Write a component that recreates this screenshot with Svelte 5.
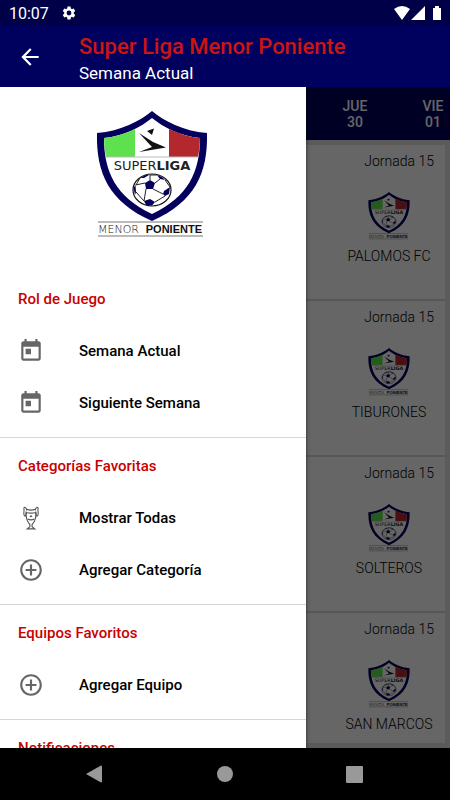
<script>
  let days = [
    { name: "MAR", number: "28" },
    { name: "MIÉ", number: "29" },
    { name: "JUE", number: "30" },
    { name: "VIE", number: "01" },
  ];

  let matches = ["PALOMOS FC", "TIBURONES", "SOLTEROS", "SAN MARCOS"];

  let sections = [
    {
      title: "Rol de Juego",
      items: [
        { icon: "calendar", label: "Semana Actual" },
        { icon: "calendar", label: "Siguiente Semana" },
      ],
    },
    {
      title: "Categorías Favoritas",
      items: [
        { icon: "trophy", label: "Mostrar Todas" },
        { icon: "add", label: "Agregar Categoría" },
      ],
    },
    {
      title: "Equipos Favoritos",
      items: [{ icon: "add", label: "Agregar Equipo" }],
    },
    { title: "Notificaciones", items: [] },
  ];
</script>

{#snippet crest()}
  <svg class="crest" viewBox="0 0 112 130" role="img" aria-label="Super Liga Menor Poniente">
    <path d="M56 1C44 11 25 21 1 23C0 63 13 92 56 111C99 92 112 63 111 23C87 21 68 11 56 1Z" fill="#05005c" />
    <path d="M56 8C45 17 28 26 8 28C8 62 20 87 56 104C92 87 104 62 104 28C84 26 67 17 56 8Z" fill="#fff" />
    <path d="M8 28C20 27 30 23 39 19V47H10Q8 38 8 28Z" fill="#5fe04f" />
    <path d="M104 28C92 27 82 23 73 19V47H102Q104 38 104 28Z" fill="#b3282d" />
    <path d="M51 21L58 18.500L56 25ZM43 23L57 32L70 37.500L43 42L56 37Z" fill="#111" />
    <path d="M10 47H102" stroke="#bbb" stroke-width="1" />
    <text class="wide" x="56" y="60" text-anchor="middle">SUPER<tspan class="bold">LIGA</tspan></text>
    <!-- ball -->
    <g transform="translate(0 11)">
      <ellipse cx="56" cy="69" rx="19" ry="16" fill="#fff" stroke="#111" stroke-width="1.200" />
      <path d="M49 62L54 59L59 62L57 68L50 68ZM37.500 67L39.500 64L40 71L39 74ZM68 70L74 66L73 73L69 75L67 73ZM48 80L54 78L59 81L56 84.500L50 84ZM44 57L50 54L53 54L48 57ZM61 54L66 56L69 59L64 58Z" fill="#05005c" />
      <path d="M39.500 64L49 62M54 59V54M59 62L64 58M57 68L67 73M50 68L48 80M40 71L48 80M59 81L69 75M54 54L61 54M44 57L40 64M69 59L74 66" fill="none" stroke="#222" stroke-width="1" />
    </g>
    <path d="M2 112H107M2 126H107" stroke="#777" stroke-width="1.200" />
    <text class="menor" x="2" y="123">MENOR</text>
    <text class="poniente" x="106" y="123" text-anchor="end">PONIENTE</text>
  </svg>
{/snippet}

{#snippet icon(name)}
  <svg class="icon" viewBox="0 0 24 24" aria-hidden="true">
    {#if name == "calendar"}
      <path d="M19 3h-1V1h-2v2H8V1H6v2H5c-1.110 0-2 .9-2 2v14c0 1.100.890 2 2 2h14c1.100 0 2-.9 2-2V5c0-1.100-.9-2-2-2zm0 16H5V8h14v11zM7 10h5v5H7z" />
    {:else if name == "add"}
      <path d="M13 7h-2v4H7v2h4v4h2v-4h4v-2h-4V7zm-1-5C6.480 2 2 6.480 2 12s4.480 10 10 10 10-4.480 10-10S17.520 2 12 2zm0 18c-4.410 0-8-3.590-8-8s3.590-8 8-8 8 3.590 8 8-3.590 8-8 8z" />
    {:else}
      <g fill="none" stroke="#555" stroke-width="1">
        <path d="M8 5C8 2 5 1 5.500 4C6 6 4.500 8 6 10C7 11 7.500 9 7.500 7" />
        <path d="M16 5C16 2 19 1 18.500 4C18 6 19.500 8 18 10C17 11 16.500 9 16.500 7" />
        <path d="M8 4Q12 5.500 16 4M7.500 7Q12 8 16.500 7M7.500 6C7 12 9 16 11 18V20L8.500 22H15.500L13 20V18C15 16 17 12 16.500 6M9 13Q12 14.500 15 13M11 11L12 10L13 11" />
      </g>
    {/if}
  </svg>
{/snippet}

<div class="phone">
  <div class="status">
    <span>10:07</span>
    <svg class="gear" viewBox="0 0 24 24" aria-hidden="true">
      <path d="M19.140 12.940c.040-.3.060-.610.060-.940s-.020-.640-.070-.940l2.030-1.580a.49.49 0 0 0 .120-.610l-1.920-3.320a.49.49 0 0 0-.590-.220l-2.390.960a7 7 0 0 0-1.620-.940l-.360-2.540A.48.48 0 0 0 13.920 2.400h-3.840a.47.47 0 0 0-.470.410l-.360 2.540c-.590.240-1.130.570-1.620.940l-2.390-.960a.48.48 0 0 0-.590.220L2.740 8.870a.47.47 0 0 0 .120.610l2.030 1.580c-.050.3-.090.630-.090.940s.020.640.070.940l-2.030 1.580a.49.49 0 0 0-.120.610l1.920 3.320c.120.220.370.290.590.220l2.390-.960c.5.380 1.030.7 1.620.940l.360 2.540c.050.240.240.410.480.410h3.840c.240 0 .440-.170.470-.410l.360-2.540a7 7 0 0 0 1.620-.940l2.390.960c.220.080.470 0 .590-.220l1.920-3.320a.47.47 0 0 0-.120-.610zM12 15.600A3.600 3.600 0 1 1 12 8.400a3.600 3.600 0 0 1 0 7.200z" />
    </svg>
    <svg class="signals" viewBox="0 0 50 16" aria-hidden="true">
      <path d="M1 4Q9 -2 17 4L9 15ZM18 15L32 1V15ZM40 3H42V1H46V3H48V15H40Z" />
    </svg>
  </div>

  <header>
    <button class="back" aria-label="Volver">
      <svg class="icon" viewBox="0 0 24 24" aria-hidden="true">
        <path d="M20 11H7.830l5.590-5.590L12 4l-8 8 8 8 1.410-1.410L7.830 13H20v-2z" />
      </svg>
    </button>
    <div class="titles">
      <h1>Super Liga Menor Poniente</h1>
      <p>Semana Actual</p>
    </div>
  </header>

  <div class="content">
    <div class="days">
      {#each days as day}
        <button class="day">{day.name}<br />{day.number}</button>
      {/each}
    </div>
    <main>
      {#each matches as team}
        <article>
          <span class="round">Jornada 15</span>
          <div class="team">
            {@render crest()}
            <span>{team}</span>
          </div>
        </article>
      {/each}
    </main>

    <div class="scrim"></div>
    <nav class="drawer">
      <div class="logo">{@render crest()}</div>
      {#each sections as section}
        <section>
          <h2>{section.title}</h2>
          {#each section.items as item}
            <button class="item">{@render icon(item.icon)}{item.label}</button>
          {/each}
        </section>
      {/each}
    </nav>
  </div>

  <div class="navbar">
    <button aria-label="Atrás"><svg viewBox="0 0 18 18"><path d="M0 9L15 0.500Q16 0.500 16 1.500V16.500Q16 17.500 15 17.500Z" /></svg></button>
    <button aria-label="Inicio"><svg viewBox="0 0 18 18"><circle cx="9" cy="9" r="8" /></svg></button>
    <button aria-label="Recientes"><svg viewBox="0 0 18 18"><rect x="0" y="1" width="17" height="17" rx="1" /></svg></button>
  </div>
</div>

<style>
  :global(body) {
    margin: 0;
    font-family: Roboto, "Liberation Sans", sans-serif;
  }
  .phone {
    display: flex;
    flex-direction: column;
    height: 100vh;
    overflow: hidden;
  }
  button {
    border: none;
    background: none;
    padding: 0;
    font: inherit;
    color: inherit;
    cursor: pointer;
  }
  h1, h2, p {
    margin: 0;
  }
  .icon {
    width: 26px;
    height: 26px;
    flex: none;
    fill: #666;
  }

  .status {
    display: flex;
    align-items: center;
    gap: 12px;
    height: 26px;
    padding: 0 7px 0 9px;
    background: #000048;
    color: #fff;
    font-size: 16px;
  }
  .gear {
    width: 16px;
    height: 16px;
    fill: #fff;
  }
  .signals {
    width: 50px;
    height: 16px;
    margin-left: auto;
    fill: #fff;
  }

  header {
    display: flex;
    align-items: center;
    height: 61px;
    background: #00005e;
    color: #fff;
  }
  .back {
    width: 79px;
    padding-left: 17px;
    text-align: left;
  }
  .back .icon {
    display: block;
    fill: #fff;
  }
  .titles {
    padding-top: 4px;
  }
  h1 {
    color: #cc1512;
    font-size: 22px;
    font-weight: 500;
    line-height: 28px;
  }
  header p {
    font-size: 17px;
    line-height: 24px;
  }

  .content {
    position: relative;
    display: flex;
    flex-direction: column;
    flex: 1;
    min-height: 0;
    overflow: hidden;
    background: #e4e4e4;
  }
  .days {
    display: flex;
    justify-content: flex-end;
    flex: none;
    height: 53px;
    margin-right: -22px;
    background: #00005e;
    color: #fff;
  }
  .day {
    flex: none;
    width: 78px;
    font-size: 14px;
    font-weight: 500;
    line-height: 16px;
  }
  main {
    flex: 1;
    min-height: 0;
    margin: 5px;
    overflow: hidden;
  }
  article {
    box-sizing: border-box;
    height: 156px;
    padding: 6px 11px;
    border-bottom: 2px solid #dadada;
    background: #fff;
    color: #000;
    font-size: 14px;
    font-weight: 300;
    line-height: 20px;
  }
  .round {
    display: block;
    text-align: right;
  }
  .team {
    display: flex;
    flex-direction: column;
    align-items: center;
    gap: 5px;
    width: 90px;
    margin-left: auto;
    padding-top: 20px;
    white-space: nowrap;
  }
  .team .crest {
    width: 42px;
    height: 50px;
  }

  .crest {
    display: block;
  }
  .wide, .menor {
    font-family: "DejaVu Sans", sans-serif;
    font-size: 13px;
    font-weight: 400;
    fill: #222;
  }
  .menor {
    font-size: 11px;
    font-weight: 200;
  }
  .bold {
    font-weight: 700;
  }
  .poniente {
    font-family: "Liberation Sans", sans-serif;
    font-size: 11px;
    font-weight: 700;
    fill: #111;
  }

  .scrim {
    position: absolute;
    inset: 0;
    background: rgba(0, 0, 0, 0.6);
  }
  .drawer {
    position: absolute;
    top: 0;
    bottom: 0;
    left: 0;
    width: 68%;
    overflow: hidden;
    background: #fff;
    box-shadow: 0 0 4px rgba(0, 0, 0, 0.6);
  }
  .logo {
    display: flex;
    justify-content: center;
    height: 161px;
    padding: 23px 3px 0 0;
  }
  .logo .crest {
    width: 112px;
    height: 130px;
  }
  section {
    padding: 2px 0 8px;
    border-bottom: 1px solid #d6d6d6;
  }
  h2 {
    padding-left: 18px;
    color: #c80000;
    font-size: 15px;
    font-weight: 500;
    line-height: 52px;
  }
  .item {
    display: flex;
    align-items: center;
    gap: 35px;
    width: 100%;
    height: 52px;
    padding-left: 18px;
    color: #000;
    font-size: 15px;
    font-weight: 500;
    text-align: left;
  }

  .navbar {
    display: flex;
    justify-content: center;
    align-items: center;
    flex: none;
    gap: 112px;
    height: 52px;
    background: #000;
  }
  .navbar svg {
    display: block;
    width: 18px;
    height: 18px;
    fill: #999;
  }
</style>
